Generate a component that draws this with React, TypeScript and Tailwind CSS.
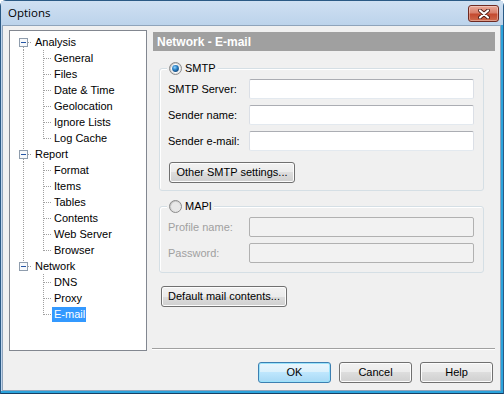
import type { ReactNode } from "react";

const tree = [
  { label: "Analysis", children: ["General", "Files", "Date & Time", "Geolocation", "Ignore Lists", "Log Cache"] },
  { label: "Report", children: ["Format", "Items", "Tables", "Contents", "Web Server", "Browser"] },
  { label: "Network", children: ["DNS", "Proxy", "E-mail"] },
];

const DOT = { stroke: "#a0a0a0", strokeDasharray: "1 1", shapeRendering: "crispEdges" as const };

const RootRow = ({ label, first, last }: { label: string; first: boolean; last: boolean }) => (
  <div className="flex h-[16px] items-center">
    <svg width="22" height="16" className="shrink-0">
      {!first && <line x1="13.5" y1="0" x2="13.5" y2="4" {...DOT} />}
      {!last && <line x1="13.5" y1="13" x2="13.5" y2="16" {...DOT} />}
      <line x1="18" y1="8.5" x2="22" y2="8.5" {...DOT} />
      <rect x="9.5" y="4.5" width="8" height="8" fill="#f7f9fb" stroke="#8f9dad" shapeRendering="crispEdges" />
      <line x1="11" y1="8.5" x2="16" y2="8.5" stroke="#2656a5" shapeRendering="crispEdges" />
    </svg>
    <span className="pl-[3px] leading-[16px]">{label}</span>
  </div>
);

const ChildRow = ({ label, parentLast, last, selected }: { label: string; parentLast: boolean; last: boolean; selected?: boolean }) => (
  <div className="flex h-[16px] items-center">
    <svg width="42" height="16" className="shrink-0">
      {!parentLast && <line x1="13.5" y1="0" x2="13.5" y2="16" {...DOT} />}
      <line x1="33.5" y1="0" x2="33.5" y2={last ? 9 : 16} {...DOT} />
      <line x1="34" y1="8.5" x2="42" y2="8.5" {...DOT} />
    </svg>
    <span className={`pl-[2px] pr-[1px] leading-[15px] ${selected ? "bg-[#3399ff] text-white" : ""}`}>{label}</span>
  </div>
);

const Radio = ({ checked, id }: { checked?: boolean; id: string }) => (
  <svg width="13" height="13" viewBox="0 0 13 13" className="shrink-0">
    <defs>
      <linearGradient id={`${id}-ring`} x1="0" y1="0" x2="1" y2="1">
        <stop offset="0" stopColor="#bfbfbf" />
        <stop offset="1" stopColor="#f4f4f4" />
      </linearGradient>
      <radialGradient id={`${id}-dot`} cx="0.4" cy="0.35" r="0.75">
        <stop offset="0" stopColor="#9ad6fa" />
        <stop offset="0.45" stopColor="#2b83c9" />
        <stop offset="1" stopColor="#0d3a68" />
      </radialGradient>
    </defs>
    <circle cx="6.5" cy="6.5" r="6" fill={`url(#${id}-ring)`} stroke="#8b8b8b" />
    <circle cx="6.5" cy="6.5" r="4.4" fill={checked ? "#ffffff" : "#e8e8e8"} />
    {checked && <circle cx="6.5" cy="6.5" r="3.4" fill={`url(#${id}-dot)`} />}
  </svg>
);

const Btn = ({ children, w, primary }: { children: ReactNode; w: string; primary?: boolean }) => (
  <button
    className={`${w} h-[21px] rounded-[3px] border text-[11px] leading-none text-black ${
      primary
        ? "border-[#3c7fb1] bg-[linear-gradient(#eaf6fd_0%,#d9f0fc_50%,#bee6fd_50%,#a7d9f5_100%)] shadow-[inset_0_0_0_1px_#9be3fb]"
        : "border-[#707070] bg-[linear-gradient(#f2f2f2_0%,#ebebeb_50%,#dddddd_50%,#cfcfcf_100%)] shadow-[inset_0_0_0_1px_#fcfcfc]"
    }`}
  >
    {children}
  </button>
);

const Field = ({ label, disabled }: { label: string; disabled?: boolean }) => (
  <div className="flex h-[20px] items-center">
    <span className={`w-[81px] ${disabled ? "text-[#a0a0a0]" : "text-black"}`}>{label}</span>
    <input
      readOnly
      disabled={disabled}
      className={`w-[225px] h-[20px] rounded-[2px] border outline-none ${
        disabled
          ? "border-[#b1b1b1] bg-[#f2f2f2]"
          : "border-t-[#abadb3] border-x-[#dbdfe6] border-b-[#e3e9ef] bg-white"
      }`}
    />
  </div>
);

export default function App() {
  return (
    <div className="w-[504px] h-[394px] flex flex-col border border-[#2b5a85] border-b-[#173f63] rounded-t-[6px] bg-[#bfd5ed] pl-[1px] pr-[2px] pb-[2px] shadow-[inset_-2px_-2px_0_#2ba3dc] font-['Liberation_Sans',Arial,sans-serif] text-[11px] text-black">
      {/* title bar */}
      <div className="h-[24px] flex items-start justify-between bg-gradient-to-b from-[#cfe0f2] to-[#bcd3eb] -ml-[1px] -mr-[2px] pl-[7px] pr-[4px]">
        <span className="pt-[4px] font-['Open_Sans',sans-serif] text-[11.5px] leading-[16px]">Options</span>
        <div className="mt-[4px] w-[31px] h-[17px] rounded-[3px] border border-[#6e2a22] bg-[linear-gradient(#e9a898_0%,#d9806c_45%,#c44a30_55%,#cf6a4c_100%)] shadow-[inset_0_0_0_1px_rgba(255,255,255,0.35)] flex items-center justify-center">
          <svg width="12" height="10" viewBox="0 0 12 10">
            <path d="M2 1.5 L10 8.5 M10 1.5 L2 8.5" stroke="#4a1a14" strokeWidth="3.8" strokeLinecap="round" />
            <path d="M2 1.5 L10 8.5 M10 1.5 L2 8.5" stroke="#ffffff" strokeWidth="2.2" strokeLinecap="round" />
          </svg>
        </div>
      </div>

      {/* client */}
      <div className="flex-1 flex border border-[#8fa4bb] bg-[#f0f0f0]">
        <div className="ml-[6px] mt-[4px] w-[138px] h-[321px] border border-[#828790] bg-white pt-[3px]">
          {tree.map((node, i) => (
            <div key={node.label}>
              <RootRow label={node.label} first={i === 0} last={i === tree.length - 1} />
              {node.children.map((c, j) => (
                <ChildRow
                  key={c}
                  label={c}
                  parentLast={i === tree.length - 1}
                  last={j === node.children.length - 1}
                  selected={c === "E-mail"}
                />
              ))}
            </div>
          ))}
        </div>

        <div className="ml-[6px] mt-[6px] w-[342px] flex flex-col">
          <div className="h-[19px] bg-[#a0a0a0] pl-[4px] flex items-center text-[12px] font-bold text-white">
            Network - E-mail
          </div>

          <div className="relative ml-[6px] mt-[17px] w-[325px] h-[123px] rounded-[3px] border border-[#d5dfe5] shadow-[inset_1px_1px_0_#ffffff] pl-[8px] pt-[10px]">
            <div className="absolute -top-[7px] left-[7px] flex items-center gap-[3px] bg-[#f0f0f0] px-[2px] h-[13px]">
              <Radio checked id="smtp" />
              <span className="leading-[13px]">SMTP</span>
            </div>
            <div className="flex flex-col gap-[6px]">
              <Field label="SMTP Server:" />
              <Field label="Sender name:" />
              <Field label="Sender e-mail:" />
            </div>
            <div className="mt-[11px] ml-[1px]">
              <Btn w="w-[126px]">Other SMTP settings...</Btn>
            </div>
          </div>

          <div className="relative ml-[6px] mt-[15px] w-[325px] h-[67px] rounded-[3px] border border-[#d5dfe5] shadow-[inset_1px_1px_0_#ffffff] pl-[8px] pt-[10px]">
            <div className="absolute -top-[7px] left-[7px] flex items-center gap-[3px] bg-[#f0f0f0] px-[2px] h-[13px]">
              <Radio id="mapi" />
              <span className="leading-[13px]">MAPI</span>
            </div>
            <div className="flex flex-col gap-[6px]">
              <Field label="Profile name:" disabled />
              <Field label="Password:" disabled />
            </div>
          </div>

          <div className="mt-[13px] ml-[8px]">
            <Btn w="w-[126px]">Default mail contents...</Btn>
          </div>

          <div className="mt-[41px] -ml-[1px] h-[2px] border-t border-[#a0a0a0] border-b border-b-white" />

          <div className="mt-[12px] flex justify-end gap-[8px] pr-[2px]">
            <Btn w="w-[73px]" primary>OK</Btn>
            <Btn w="w-[73px]">Cancel</Btn>
            <Btn w="w-[73px]">Help</Btn>
          </div>
        </div>
      </div>
    </div>
  );
}
